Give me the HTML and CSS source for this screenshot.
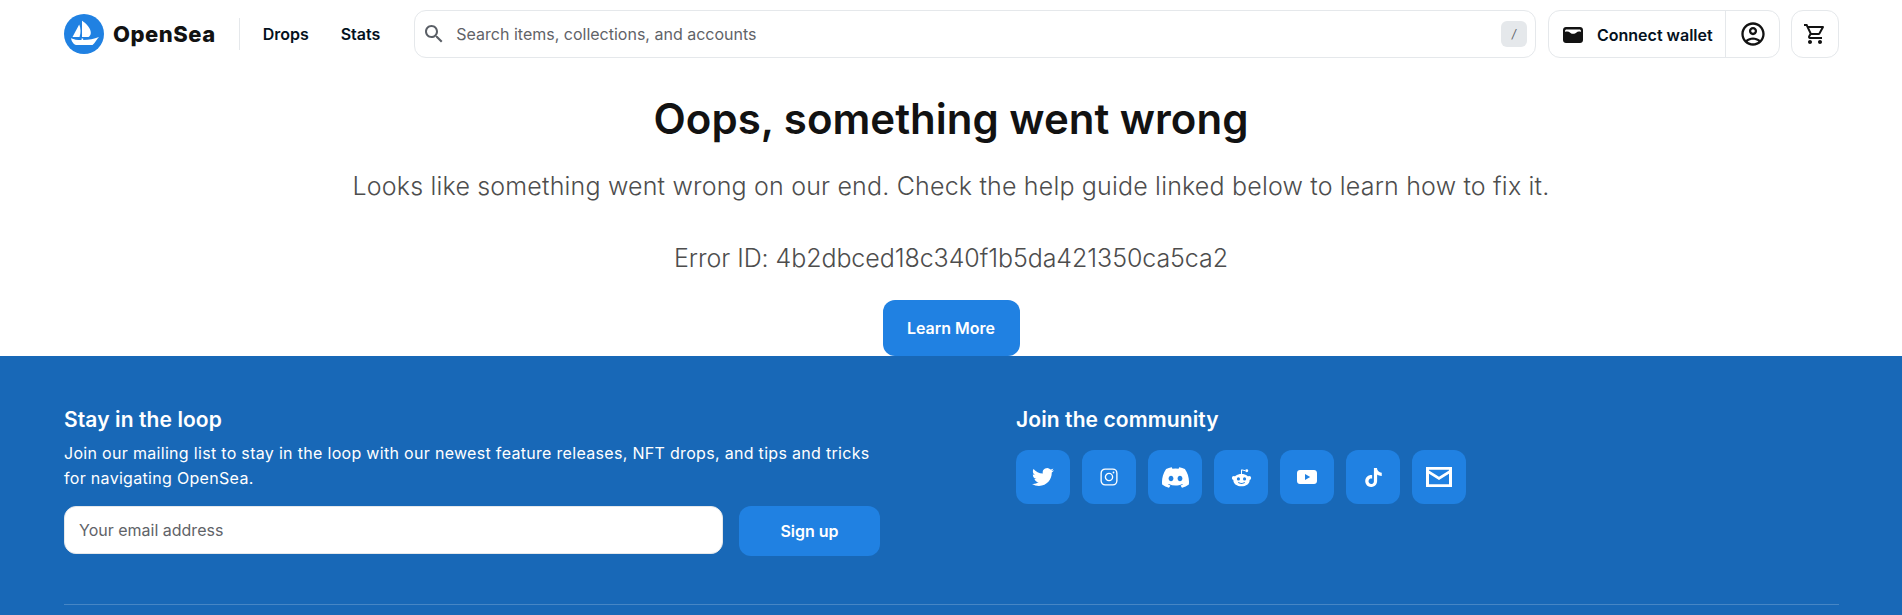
FILE: index.html
```html
<!DOCTYPE html>
<html lang="en">

<head>
    <meta charset="UTF-8">
    <meta name="viewport" content="width=device-width, initial-scale=1.0">
    <title>OpenSea</title>
    <link rel="stylesheet" href="styles.css">
</head>

<body>
    <header class="navbar">
        <a class="logo" href="#">
            <svg class="logo-mark" viewBox="0 0 40 40">
                <circle cx="20" cy="20" r="20" fill="#2081e2" />
                <path fill="#fff" d="M8.500 23L15.200 10.500C16.800 14 17 19 15.500 23z" />
                <path fill="#fff" d="M18 6.800c.4 0 .8.200 1 .7 4 2.500 8 7.500 7.800 11.500-.1 2-1.300 3.500-2.300 4H18z" />
                <path fill="#fff" d="M7 24.200c3 1.300 6 1.800 10.500 1.800v-1.500h1.700V26c5.800 0 10.800-1.200 15.800-3-2 2-4 6-6.500 8H13c-3 0-5.200-3-6-6.800z" />
            </svg>
            <span class="logo-text">OpenSea</span>
        </a>
        <nav class="nav-links">
            <a href="#">Drops</a>
            <a href="#">Stats</a>
        </nav>
        <div class="search">
            <svg class="icon search-icon" viewBox="0 0 24 24">
                <path d="M15.500 14h-.79l-.28-.27C15.410 12.590 16 11.110 16 9.500 16 5.910 13.090 3 9.500 3S3 5.910 3 9.500 5.910 16 9.500 16c1.610 0 3.090-.59 4.230-1.570l.27.28v.79l5 4.990L20.490 19l-4.990-5zm-6 0C7.010 14 5 11.990 5 9.500S7.010 5 9.500 5 14 7.010 14 9.500 11.990 14 9.500 14z" />
            </svg>
            <span class="search-text">Search items, collections, and accounts</span>
            <span class="slash">/</span>
        </div>
        <div class="wallet-group">
            <button class="wallet-btn">
                <svg class="wallet-icon" viewBox="0 0 20 16">
                    <path fill="#121212" d="M3 0h14c1.700 0 3 1.300 3 3v10c0 1.700-1.300 3-3 3H3c-1.700 0-3-1.300-3-3V3c0-1.700 1.300-3 3-3z" />
                    <path fill="#fff" d="M2 4.200C2 3.300 2.700 2.600 3.600 2.600h12.800c.9 0 1.600.7 1.600 1.600v.6c-2.300-.6-3.500-.4-4.500.6-.9.9-2 1.400-3.500 1.400S7.800 6.300 6.900 5.400C5.900 4.400 4.300 4.200 2 4.800z" />
                </svg>
                Connect wallet
            </button>
            <button class="user-btn">
                <svg class="icon user-icon" viewBox="0 0 24 24">
                    <path d="M12 2C6.480 2 2 6.480 2 12s4.480 10 10 10 10-4.480 10-10S17.520 2 12 2zM7.350 18.500C8.660 17.560 10.260 17 12 17s3.340.56 4.650 1.500c-1.310.94-2.910 1.500-4.650 1.500s-3.340-.56-4.650-1.500zm10.790-1.380C16.450 15.800 14.320 15 12 15s-4.450.8-6.140 2.120C4.700 15.730 4 13.950 4 12c0-4.420 3.580-8 8-8s8 3.580 8 8c0 1.950-.7 3.730-1.860 5.120zM12 6c-1.930 0-3.500 1.570-3.500 3.500S10.070 13 12 13s3.500-1.570 3.500-3.500S13.930 6 12 6zm0 5c-.83 0-1.500-.67-1.500-1.500S11.170 8 12 8s1.500.67 1.500 1.500S12.830 11 12 11z" />
                </svg>
            </button>
        </div>
        <button class="cart-btn">
            <svg class="icon" viewBox="0 0 24 24">
                <path d="M15.550 13c.75 0 1.410-.41 1.750-1.030l3.580-6.490c.37-.66-.11-1.480-.87-1.480H5.210l-.94-2H1v2h2l3.600 7.590-1.350 2.440C4.520 15.370 5.480 17 7 17h12v-2H7l1.100-2h7.450zM6.160 6h12.150l-2.760 5H8.530L6.160 6zM7 18c-1.100 0-1.990.9-1.990 2S5.900 22 7 22s2-.9 2-2-.9-2-2-2zm10 0c-1.100 0-1.990.9-1.990 2s.89 2 1.990 2 2-.9 2-2-.9-2-2-2z" />
            </svg>
        </button>
    </header>

    <main class="error-page">
        <h1>Oops, something went wrong</h1>
        <p class="error-text">Looks like something went wrong on our end. Check the help guide linked below to learn how to fix it.</p>
        <p class="error-id">Error ID: 4b2dbced18c340f1b5da421350ca5ca2</p>
        <a class="learn-more" href="#">Learn More</a>
    </main>

    <footer class="footer">
        <div class="footer-top">
            <section class="newsletter">
                <h3>Stay in the loop</h3>
                <p>Join our mailing list to stay in the loop with our newest feature releases, NFT drops, and tips and tricks for navigating OpenSea.</p>
                <form class="signup">
                    <div class="email-box">Your email address</div>
                    <button type="button" class="signup-btn">Sign up</button>
                </form>
            </section>
            <section class="community">
                <h3>Join the community</h3>
                <div class="socials">
                    <a class="social" href="#">
                        <svg class="tw" viewBox="0 0 24 24"><path d="M23.950 4.570a10 10 0 0 1-2.820.77 4.960 4.960 0 0 0 2.160-2.720c-.95.55-2 .95-3.120 1.180a4.920 4.920 0 0 0-8.380 4.480C7.690 8.090 4.070 6.130 1.640 3.160a4.820 4.820 0 0 0-.67 2.480c0 1.710.87 3.210 2.190 4.100a4.900 4.900 0 0 1-2.230-.62v.06a4.920 4.920 0 0 0 3.950 4.830 5 5 0 0 1-2.210.08 4.940 4.940 0 0 0 4.600 3.420A9.870 9.870 0 0 1 0 19.540a14 14 0 0 0 7.560 2.210c9.050 0 14-7.500 14-13.980 0-.21 0-.42-.02-.63a9.940 9.940 0 0 0 2.460-2.550z" /></svg>
                    </a>
                    <a class="social" href="#">
                        <svg class="ig" viewBox="0 0 16 16">
                            <rect x="1" y="1" width="14" height="14" rx="3.600" fill="none" stroke="#fff" stroke-width="1.200" />
                            <circle cx="8" cy="8" r="3.200" fill="none" stroke="#fff" stroke-width="1.200" />
                            <circle cx="12" cy="4" r=".8" />
                        </svg>
                    </a>
                    <a class="social" href="#">
                        <svg class="dc" viewBox="0 0 24 24"><path d="M20.317 4.370a19.791 19.791 0 0 0-4.885-1.515.074.074 0 0 0-.079.037c-.21.375-.444.864-.608 1.250a18.270 18.270 0 0 0-5.487 0 12.640 12.640 0 0 0-.617-1.250.077.077 0 0 0-.079-.037A19.736 19.736 0 0 0 3.677 4.370a.07.07 0 0 0-.032.027C.533 9.046-.32 13.580.099 18.057a.082.082 0 0 0 .031.057 19.900 19.900 0 0 0 5.993 3.030.078.078 0 0 0 .084-.028c.462-.63.874-1.295 1.226-1.994a.076.076 0 0 0-.041-.106 13.107 13.107 0 0 1-1.872-.892.077.077 0 0 1-.008-.128 10.200 10.200 0 0 0 .372-.292.074.074 0 0 1 .077-.01c3.928 1.793 8.180 1.793 12.062 0a.074.074 0 0 1 .078.01c.12.098.246.198.373.292a.077.077 0 0 1-.006.127 12.299 12.299 0 0 1-1.873.892.077.077 0 0 0-.041.107c.36.698.772 1.362 1.225 1.993a.076.076 0 0 0 .084.028 19.839 19.839 0 0 0 6.002-3.030.077.077 0 0 0 .032-.054c.5-5.177-.838-9.674-3.549-13.660a.061.061 0 0 0-.031-.03zM8.020 15.330c-1.183 0-2.157-1.085-2.157-2.419 0-1.333.956-2.419 2.157-2.419 1.210 0 2.176 1.096 2.157 2.420 0 1.333-.956 2.418-2.157 2.418zm7.975 0c-1.183 0-2.157-1.085-2.157-2.419 0-1.333.955-2.419 2.157-2.419 1.210 0 2.176 1.096 2.157 2.420 0 1.333-.946 2.418-2.157 2.418z" /></svg>
                    </a>
                    <a class="social" href="#">
                        <svg class="rd" viewBox="0 0 24 24">
                            <path d="M12 9.500V3.200l4.200 1" fill="none" stroke="#fff" stroke-width="1.100" />
                            <circle cx="18" cy="4.200" r="1.700" />
                            <circle cx="3.300" cy="12.500" r="2.300" />
                            <circle cx="20.700" cy="12.500" r="2.300" />
                            <path fill-rule="evenodd" d="M12 8c5.200 0 9.300 3 9.300 7s-4.100 7-9.300 7-9.300-3-9.300-7 4.100-7 9.300-7zM8.500 11.800a1.800 1.800 0 1 0 0 3.600 1.800 1.800 0 0 0 0-3.600zm7 0a1.800 1.800 0 1 0 0 3.600 1.800 1.800 0 0 0 0-3.600zM8 17.700c1 1.100 2.400 1.600 4 1.600s3-.5 4-1.600l-.8-.7c-.8.8-1.900 1.200-3.200 1.200s-2.400-.4-3.200-1.200z" />
                        </svg>
                    </a>
                    <a class="social" href="#">
                        <svg class="yt" viewBox="0 0 20 14">
                            <path fill-rule="evenodd" d="M3 0h14c1.700 0 3 1.300 3 3v8c0 1.700-1.300 3-3 3H3c-1.700 0-3-1.300-3-3V3c0-1.700 1.300-3 3-3zm5 4v6l5.200-3z" />
                        </svg>
                    </a>
                    <a class="social" href="#">
                        <svg class="tt" viewBox="0 0 24 24"><path d="M12.525.02c1.310-.02 2.610-.01 3.910-.02.08 1.530.63 3.090 1.750 4.170 1.120 1.110 2.700 1.620 4.240 1.790v4.030c-1.440-.05-2.890-.35-4.200-.97-.57-.26-1.100-.59-1.620-.93-.01 2.920.01 5.840-.02 8.750-.08 1.400-.54 2.790-1.350 3.940-1.310 1.920-3.580 3.170-5.910 3.210-1.430.08-2.860-.31-4.080-1.030-2.020-1.190-3.440-3.370-3.650-5.710-.02-.5-.03-1-.01-1.490.18-1.900 1.120-3.720 2.580-4.960 1.660-1.440 3.980-2.130 6.150-1.720.02 1.480-.04 2.960-.04 4.440-.99-.32-2.150-.23-3.020.37-.63.41-1.110 1.040-1.360 1.750-.21.51-.15 1.070-.14 1.610.24 1.640 1.820 3.020 3.500 2.870 1.120-.01 2.190-.66 2.770-1.610.19-.33.4-.67.41-1.060.1-1.790.06-3.570.07-5.360.01-4.030-.01-8.050.02-12.070z" /></svg>
                    </a>
                    <a class="social" href="#">
                        <svg class="ml" viewBox="0 0 26 20">
                            <path fill-rule="evenodd" d="M0 0h26v20H0zM3 2.800v.6L13 9.800l10-6.400v-.6zm20 3.900L13 13 3 6.700v10.500h20z" />
                        </svg>
                    </a>
                </div>
            </section>
        </div>
        <div class="footer-line"></div>
    </footer>
</body>

</html>
```

FILE: styles.css
```css
* {
    box-sizing: border-box;
}

html,
body {
    margin: 0;
    height: 100%;
}

body {
    font-family: Inter, "Liberation Sans", sans-serif;
    color: #04111d;
    background: #fff;
    overflow: hidden;
}

a {
    text-decoration: none;
    color: inherit;
}

button {
    font-family: inherit;
    border: 0;
    background: none;
    cursor: pointer;
}

/* top bar */
.navbar {
    display: flex;
    align-items: center;
    height: 68px;
    padding: 0 63px 0 64px;
}

.logo {
    display: flex;
    align-items: center;
    gap: 9px;
    padding-right: 23px;
}

.logo-mark {
    width: 40px;
    height: 40px;
}

.logo-text {
    font-size: 22px;
    font-weight: 800;
    letter-spacing: .5px;
    color: #121212;
}

.nav-links {
    display: flex;
    gap: 32px;
    align-items: center;
    height: 32px;
    padding-left: 23px;
    border-left: 1px solid #e5e8eb;
    font-size: 16px;
    font-weight: 600;
    margin-right: 34px;
}

.icon {
    width: 24px;
    height: 24px;
    fill: #121212;
}

.user-icon {
    width: 28px;
    height: 28px;
}

.search {
    flex: 1;
    display: flex;
    align-items: center;
    height: 48px;
    padding: 0 8px 0 7px;
    border: 1px solid #e5e8eb;
    border-radius: 12px;
}

.search-icon {
    fill: #5a5f66;
}

.search-text {
    flex: 1;
    margin-left: 10px;
    font-size: 16px;
    color: #5f6368;
}

.slash {
    width: 26px;
    height: 26px;
    line-height: 26px;
    text-align: center;
    border-radius: 6px;
    background: #e5e8eb;
    font-size: 12px;
    font-style: italic;
    color: #5f6368;
}

.wallet-group {
    display: flex;
    height: 48px;
    margin-left: 12px;
    border: 1px solid #e5e8eb;
    border-radius: 12px;
}

.wallet-btn {
    display: flex;
    align-items: center;
    gap: 14px;
    width: 176px;
    padding: 2px 0 0 14px;
    font-size: 16px;
    font-weight: 600;
    color: #04111d;
    white-space: nowrap;
}

.wallet-icon {
    width: 20px;
    height: 16px;
}

.user-btn {
    display: flex;
    align-items: center;
    justify-content: center;
    width: 54px;
    border-left: 1px solid #e5e8eb;
    padding: 0;
}

.cart-btn {
    display: flex;
    align-items: center;
    justify-content: center;
    width: 48px;
    height: 48px;
    margin-left: 11px;
    padding: 0;
    border: 1px solid #e5e8eb;
    border-radius: 12px;
}

/* error message */
.error-page {
    display: flex;
    flex-direction: column;
    align-items: center;
    height: 288px;
    padding-top: 21px;
    text-align: center;
}

.error-page h1 {
    margin: 0;
    font-size: 42px;
    line-height: 60px;
    font-weight: 600;
    color: #121212;
}

.error-text {
    margin: 19px 0 0;
    font-size: 25px;
    line-height: 36px;
    letter-spacing: .18px;
    font-weight: 300;
    color: #4d4d4d;
}

.error-id {
    margin: 36px 0 0;
    font-size: 25px;
    line-height: 36px;
    letter-spacing: -.07px;
    font-weight: 300;
    color: #4d4d4d;
}

.learn-more {
    display: flex;
    align-items: center;
    justify-content: center;
    width: 137px;
    height: 56px;
    margin-top: 24px;
    border-radius: 12px;
    background: #2081e2;
    color: #fff;
    font-size: 16px;
    font-weight: 600;
}

/* footer */
.footer {
    height: 259px;
    padding: 49px 63px 0 64px;
    background: #1868b7;
    color: #fff;
}

.footer-top {
    display: flex;
    gap: 136px;
    height: 199px;
}

.newsletter {
    width: 816px;
}

.footer h3 {
    margin: 0;
    font-size: 21px;
    line-height: 30px;
    letter-spacing: .1px;
    font-weight: 600;
}

.newsletter p {
    margin: 6px 0 0;
    font-size: 16px;
    line-height: 25px;
    letter-spacing: .31px;
    font-weight: 400;
}

.signup {
    display: flex;
    gap: 16px;
    margin-top: 15px;
    align-items: flex-start;
}

.email-box {
    width: 659px;
    height: 48px;
    line-height: 46px;
    padding-left: 14px;
    border: 1px solid #e5e8eb;
    border-radius: 12px;
    background: #fff;
    color: #5f6368;
    font-size: 16px;
}

.signup-btn {
    width: 141px;
    height: 50px;
    border-radius: 12px;
    background: #2081e2;
    color: #fff;
    font-size: 16px;
    font-weight: 600;
}

.socials {
    display: flex;
    gap: 12px;
    margin-top: 15px;
}

.social {
    display: flex;
    align-items: center;
    justify-content: center;
    width: 54px;
    height: 54px;
    border-radius: 12px;
    background: #2081e2;
}

.social svg {
    fill: #fff;
}

.tw {
    width: 22px;
    height: 22px;
}

.ig {
    width: 18px;
    height: 18px;
}

.dc {
    width: 27px;
    height: 27px;
}

.rd {
    width: 21px;
    height: 21px;
}

.yt {
    width: 20px;
    height: 14px;
}

.tt {
    width: 19px;
    height: 21px;
}

.ml {
    width: 26px;
    height: 20px;
}

.footer-line {
    height: 1px;
    background: rgba(255, 255, 255, .2);
}
```
